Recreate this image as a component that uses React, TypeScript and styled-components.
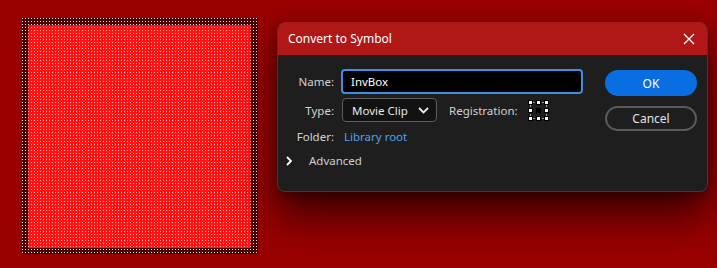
import React from 'react';
import styled, { createGlobalStyle } from 'styled-components';

const Global = createGlobalStyle`
  html, body { margin: 0; padding: 0; background: #990000; }
  body { font-family: "Noto Sans", "Liberation Sans", sans-serif; overflow: hidden; }
`;

const Stage = styled.div`
  width: 717px;
  height: 268px;
  display: flex;
  align-items: flex-start;
  background: #990000;
`;

const SymbolBox = styled.div`
  margin: 18px 0 0 22px;
  width: 236px;
  height: 236px;
  flex: none;
  svg { display: block; }
`;

const Dialog = styled.div`
  margin: 22px 0 0 19px;
  width: 431px;
  height: 170px;
  flex: none;
  box-sizing: border-box;
  border-radius: 8px;
  overflow: hidden;
  background: #1e1e1e;
  border: 1px solid #3c3c3c;
  border-top: none;
  box-shadow: 0 24px 40px rgba(0, 0, 0, 0.6), 0 4px 14px rgba(0, 0, 0, 0.35);
  display: flex;
  flex-direction: column;
`;

const TitleBar = styled.div`
  height: 33px;
  background: #b01818;
  display: flex;
  align-items: center;
  justify-content: space-between;
  padding: 0 12px 0 10px;
  color: #fff;
  font-size: 12px;
`;

const CloseBtn = styled.div`
  width: 12px;
  height: 12px;
  display: flex;
  svg { display: block; }
`;

const Body = styled.div`
  display: flex;
  padding: 14px 10px 0 0;
`;

const Form = styled.div`
  display: grid;
  grid-template-columns: 56px auto;
  column-gap: 7px;
  row-gap: 4px;
  align-items: center;
  width: 305px;
`;

const Label = styled.div`
  text-align: right;
  color: #d2d2d2;
  font-size: 11.5px;
`;

const NameInput = styled.div`
  box-sizing: border-box;
  width: 242px;
  height: 25px;
  border: 2px solid #3d8ee8;
  border-radius: 4px;
  background: #000;
  color: #fff;
  font-size: 11.5px;
  display: flex;
  align-items: center;
  padding-left: 8px;
`;

const TypeRow = styled.div`
  display: flex;
  align-items: center;
`;

const Select = styled.div`
  box-sizing: border-box;
  margin-left: 1px;
  width: 95px;
  height: 24px;
  border: 1px solid #5c5c5c;
  border-radius: 4px;
  background: #121212;
  color: #e8e8e8;
  font-size: 11.5px;
  display: flex;
  align-items: center;
  justify-content: space-between;
  padding: 0 7px 0 9px;
  svg { display: block; }
`;

const RegLabel = styled.span`
  margin-left: 12px;
  color: #d2d2d2;
  font-size: 11.5px;
`;

const RegIcon = styled.div`
  margin-left: 10px;
  display: flex;
  svg { display: block; }
`;

const FolderLabel = styled(Label)`
  margin-top: 3px;
`;

const LinkText = styled.div`
  margin-top: 3px;
  margin-left: 3px;
  color: #4fa3f0;
  font-size: 11.5px;
`;

const Advanced = styled.div`
  grid-column: 1 / span 2;
  display: flex;
  align-items: center;
  margin-top: 5px;
  padding-left: 8px;
  color: #cfcfcf;
  font-size: 11.5px;
  gap: 17px;
  svg { display: block; }
`;

const Buttons = styled.div`
  margin-left: 22px;
  margin-top: 1px;
  display: flex;
  flex-direction: column;
  gap: 10px;
`;

const Button = styled.div<{ $primary?: boolean }>`
  box-sizing: border-box;
  width: 92px;
  height: ${p => (p.$primary ? 26 : 25)}px;
  border-radius: 13px;
  display: flex;
  align-items: center;
  justify-content: center;
  font-size: 12px;
  background: ${p => (p.$primary ? '#0a6ee3' : 'transparent')};
  border: ${p => (p.$primary ? 'none' : '2px solid #5a5a5a')};
  color: ${p => (p.$primary ? '#fff' : '#e2e2e2')};
`;

const SymbolArt = () => (
  <svg width="236" height="236" viewBox="0 0 236 236" shapeRendering="crispEdges">
    <defs>
      <pattern id="dw" width="3" height="3" patternUnits="userSpaceOnUse">
        <rect x="0" y="0" width="1" height="1" fill="#e8e8e8" />
      </pattern>
      <pattern id="dc" width="3" height="3" patternUnits="userSpaceOnUse">
        <rect x="0" y="0" width="1" height="1" fill="#ffb4b4" />
      </pattern>
    </defs>
    <rect x="0" y="0" width="236" height="236" fill="#480000" />
    <rect x="0" y="0" width="236" height="236" fill="url(#dw)" />
    <rect x="6" y="7" width="223" height="223" fill="#ff1414" />
    <rect x="6" y="7" width="223" height="223" fill="url(#dc)" />
  </svg>
);

const RegistrationGlyph = () => (
  <svg width="21" height="21" viewBox="0 0 21 21" shapeRendering="crispEdges">
    <g stroke="#9a9a9a" strokeWidth="1" strokeDasharray="2 1">
      <line x1="2" y1="2.5" x2="18" y2="2.5" />
      <line x1="2" y1="18.5" x2="18" y2="18.5" />
      <line x1="2.5" y1="2" x2="2.5" y2="18" />
      <line x1="18.5" y1="2" x2="18.5" y2="18" />
    </g>
    {[0, 8, 16].map(x =>
      [0, 8, 16].map(y => (
        <rect
          key={`${x}-${y}`}
          x={x + 0.5}
          y={y + 0.5}
          width="4"
          height="4"
          fill={x === 8 && y === 8 ? '#000' : '#fff'}
          stroke="#000"
          strokeWidth="1"
        />
      ))
    )}
  </svg>
);

export default function App() {
  return (
    <>
      <Global />
      <Stage>
        <SymbolBox>
          <SymbolArt />
        </SymbolBox>
        <Dialog>
          <TitleBar>
            <span>Convert to Symbol</span>
            <CloseBtn>
              <svg width="12" height="12" viewBox="0 0 12 12">
                <path d="M1 1 L11 11 M11 1 L1 11" stroke="#fff" strokeWidth="1.3" />
              </svg>
            </CloseBtn>
          </TitleBar>
          <Body>
            <Form>
              <Label>Name:</Label>
              <NameInput>InvBox</NameInput>
              <Label>Type:</Label>
              <TypeRow>
                <Select>
                  <span>Movie Clip</span>
                  <svg width="11" height="7" viewBox="0 0 11 7">
                    <path d="M1 1 L5.5 5.5 L10 1" stroke="#e8e8e8" strokeWidth="1.8" fill="none" />
                  </svg>
                </Select>
                <RegLabel>Registration:</RegLabel>
                <RegIcon>
                  <RegistrationGlyph />
                </RegIcon>
              </TypeRow>
              <FolderLabel>Folder:</FolderLabel>
              <LinkText>Library root</LinkText>
              <Advanced>
                <svg width="6" height="10" viewBox="0 0 6 10">
                  <path d="M1 1 L5 5 L1 9" stroke="#fff" strokeWidth="1.8" fill="none" />
                </svg>
                <span>Advanced</span>
              </Advanced>
            </Form>
            <Buttons>
              <Button $primary>OK</Button>
              <Button>Cancel</Button>
            </Buttons>
          </Body>
        </Dialog>
      </Stage>
    </>
  );
}
